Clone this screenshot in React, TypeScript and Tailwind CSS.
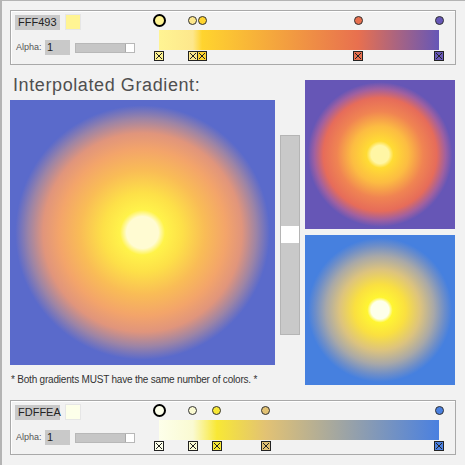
import React from "react";

type Stop = { pos: number; color: string };

const topStops: Stop[] = [
  { pos: 0, color: "#fff493" },
  { pos: 0.121, color: "#fde78c" },
  { pos: 0.154, color: "#ffd42e" },
  { pos: 0.711, color: "#e8704f" },
  { pos: 1, color: "#6657b7" },
];

const bottomStops: Stop[] = [
  { pos: 0, color: "#fdffea" },
  { pos: 0.121, color: "#fafad2" },
  { pos: 0.207, color: "#f8e835" },
  { pos: 0.382, color: "#e2c274" },
  { pos: 1, color: "#4a80e0" },
];

const BAR_W = 280;

function toGradient(stops: Stop[]) {
  return `linear-gradient(to right, ${stops.map((s) => `${s.color} ${s.pos * 100}%`).join(", ")})`;
}

function Marker({ color }: { color: string }) {
  return (
    <svg width="10" height="10" viewBox="0 0 10 10">
      <rect x="0.5" y="0.5" width="9" height="9" fill={color} stroke="#222" />
      <path d="M2 2 L8 8 M8 2 L2 8" stroke="#222" strokeWidth="1" />
    </svg>
  );
}

function GradientEditor({ hex, stops }: { hex: string; stops: Stop[] }) {
  return (
    <div className="flex h-[55px] w-[446px] border border-[#a9a9a9] shadow-[inset_1px_1px_0_#ffffff]">
      <div className="w-[140px] pl-[4px] pt-[3px]">
        <div className="flex items-center gap-[5px]">
          <div className="flex h-[15px] w-[45px] items-center bg-[#c9c9c9] pl-[3px] text-[11px] leading-none text-[#222]">
            {hex}
          </div>
          <div
            className="h-[16px] w-[16px] border border-[#e6e6e6]"
            style={{ backgroundColor: stops[0].color }}
          />
        </div>
        <div className="mt-[10px] flex items-center">
          <span className="ml-[1px] w-[29px] text-[9px] text-[#555]">Alpha:</span>
          <div className="flex h-[15px] w-[25px] items-center bg-[#c9c9c9] pl-[2px] text-[11px] leading-none text-[#222]">
            1
          </div>
          <div className="ml-[5px] flex h-[10px] w-[60px] justify-end border border-[#b8b8b8] bg-[#c6c6c6]">
            <div className="h-full w-[9px] border-l border-[#aaa] bg-white" />
          </div>
        </div>
      </div>
      <div className="relative w-[300px]">
        {stops.map((s, i) => {
          const big = i === 0;
          const d = big ? 13 : 9;
          return (
            <div
              key={"c" + i}
              className={
                big
                  ? "absolute rounded-full border-2 border-black"
                  : "absolute rounded-full border border-[#333]"
              }
              style={{
                left: 8 + s.pos * BAR_W - d / 2,
                top: 9 - d / 2,
                width: d,
                height: d,
                backgroundColor: s.color,
              }}
            />
          );
        })}
        <div className="ml-[8px] mt-[19px] h-[20px] w-[280px]" style={{ background: toGradient(stops) }} />
        {stops.map((s, i) => (
          <div key={"m" + i} className="absolute top-[40px] flex" style={{ left: 8 + s.pos * BAR_W - 5 }}>
            <Marker color={s.color} />
          </div>
        ))}
      </div>
    </div>
  );
}

export default function App() {
  return (
    <div className="h-[465px] w-[465px] overflow-hidden border-l-2 border-t border-[#b4b4b4] bg-[#f2f2f2] pl-[8px] pt-[9px] font-['Liberation_Sans',Arial,sans-serif]">
      <GradientEditor hex="FFF493" stops={topStops} />

      <div className="flex h-[335px]">
        <div className="w-[265px]">
          <h1 className="ml-[3px] mt-[8px] h-[27px] text-[18px] leading-[24px] tracking-[0.6px] text-[#4f4f4f]">
            Interpolated Gradient:
          </h1>
          <div className="h-[265px] w-[265px] bg-[radial-gradient(circle_closest-side,#fffbd2_0%,#fffbd2_12%,#fff34a_17%,#fde048_30%,#f9bc56_47%,#f3a46a_63%,#e0957c_75%,#9c84a6_86%,#5a6acb_96%,#5a6acb_100%)]" />
          <p className="ml-[1px] mt-[9px] whitespace-nowrap text-[10px] leading-[12px] tracking-[-0.2px] text-[#333]">
            * Both gradients MUST have the same number of colors. *
          </p>
        </div>

        <div className="ml-[5px] mt-[70px] h-[200px] w-[20px] border border-[#b5b5b5] bg-[#c9c9c9] pt-[90px]">
          <div className="h-[17px] w-full bg-white" />
        </div>

        <div className="ml-[5px] mt-[15px] flex w-[150px] flex-col gap-[6px]">
          <div className="h-[149px] w-[150px] bg-[radial-gradient(circle_closest-side,#fff6a4_0%,#fff6a4_12%,#ffdc34_18%,#fcbc42_38%,#f08452_58%,#e66c5a_76%,#a060a0_88%,#6656b6_97%,#6656b6_100%)]" />
          <div className="h-[150px] w-[150px] bg-[radial-gradient(circle_closest-side,#fdffea_0%,#fdffea_12%,#fff532_17%,#fae040_34%,#dcc37e_54%,#a8a8a8_72%,#6e8ec8_86%,#4680df_96%,#4680df_100%)]" />
        </div>
      </div>

      <GradientEditor hex="FDFFEA" stops={bottomStops} />
    </div>
  );
}
